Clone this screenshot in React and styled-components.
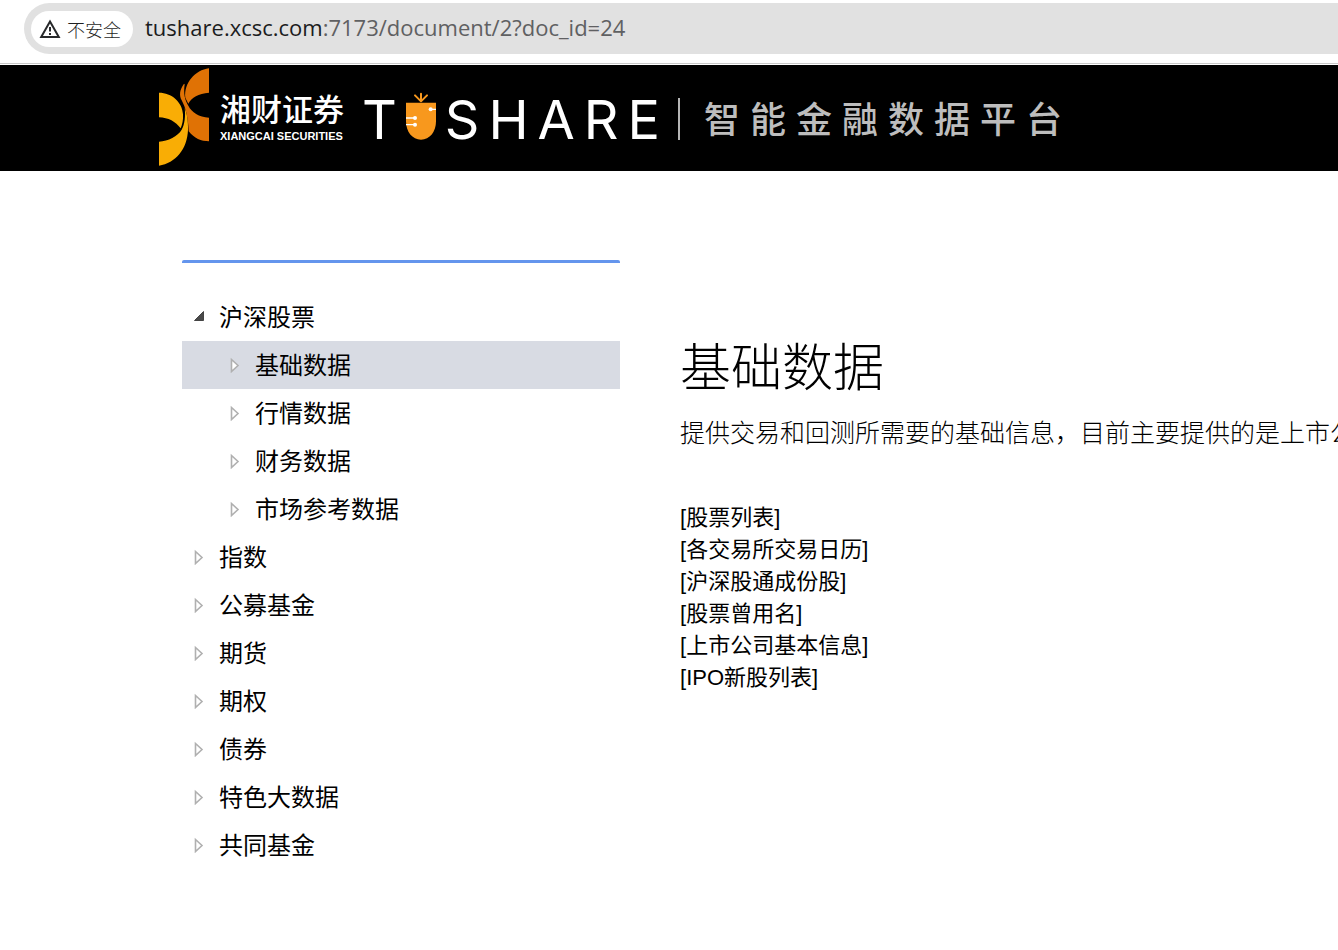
import styled, { createGlobalStyle } from 'styled-components';

const MENU = [
  {
    title: '沪深股票',
    children: [
      { title: '基础数据', active: true },
      { title: '行情数据' },
      { title: '财务数据' },
      { title: '市场参考数据' },
    ],
  },
  { title: '指数' },
  { title: '公募基金' },
  { title: '期货' },
  { title: '期权' },
  { title: '债券' },
  { title: '特色大数据' },
  { title: '共同基金' },
];

const DOCS = [
  '股票列表',
  '各交易所交易日历',
  '沪深股通成份股',
  '股票曾用名',
  '上市公司基本信息',
  'IPO新股列表',
];

const WarningIcon = () => (
  <svg width="22" height="20" viewBox="0 0 22 20" fill="none" aria-hidden="true">
    <path d="M11 2.5 19.8 18H2.2Z" stroke="#27292b" strokeWidth="2" />
    <path d="M11 8v4.6M11 14v2" stroke="#27292b" strokeWidth="2" />
  </svg>
);

const Arrow = ({ open }) => (
  <svg width="12" height="16" viewBox="0 0 12 16" aria-hidden="true">
    {open ? (
      <path d="M10.5 2.5v9H1.5Z" fill="#4a4a4a" stroke="#444" />
    ) : (
      <path d="M2.5 2.5v12L9 8.5Z" fill="#fff" stroke="#b0b0b0" strokeWidth="1.6" />
    )}
  </svg>
);

const XiangcaiMark = () => (
  <svg width="50" height="98" viewBox="0 0 150 292" aria-hidden="true">
    <path
      d="M150 0C108 5 74 45 79 88L88 106C98 88 118 75 150 73Z"
      fill="#e07205"
    />
    <path
      d="M75 46C62 64 60 80 68 96C80 118 88 150 89 189C106 210 126 219 150 219V148C120 146 98 132 88 112C78 96 73 76 77 48Z"
      fill="#e07205"
    />
    <path
      d="M0 73C38 73 70 101 72 138C73 156 70 168 65 180C50 160 28 148 0 147Z"
      fill="#f9ad05"
    />
    <path
      d="M0 292V220C28 218 56 204 68 184C77 168 80 142 77 118C84 137 88 157 87 184C85 242 50 284 0 292Z"
      fill="#f9ad05"
    />
  </svg>
);

const Carrot = () => (
  <svg width="32" height="48" viewBox="0 0 96 144" fill="none" aria-hidden="true">
    <path d="M3 32H93V88C93 120 74 143 48 143S3 120 3 88Z" fill="#f8981d" />
    <path
      d="M48 28V5M48 28L30 10M48 28L66 10"
      stroke="#f8981d"
      strokeWidth="6"
      strokeLinecap="round"
    />
    <path d="M3 78H29M3 98H29M78 52H93" stroke="#fff" strokeWidth="4" />
    <circle cx="30" cy="78" r="6" fill="#fff" />
    <circle cx="30" cy="98" r="6" fill="#fff" />
    <circle cx="77" cy="52" r="6" fill="#fff" />
  </svg>
);

const MenuItem = ({ item, level = 0 }) => (
  <li>
    <MenuLink href="#" $level={level} $active={item.active}>
      <Arrow open={!!item.children} />
      <MenuLabel>{item.title}</MenuLabel>
    </MenuLink>
    {item.children && (
      <MenuList>
        {item.children.map((child) => (
          <MenuItem key={child.title} item={child} level={level + 1} />
        ))}
      </MenuList>
    )}
  </li>
);

const App = () => {
  return (
    <>
      <GlobalStyle />
      <BrowserBar>
        <AddressBar>
          <SecurityButton type="button">
            <WarningIcon />
            不安全
          </SecurityButton>
          <Url>
            <strong>tushare.xcsc.com</strong>:7173/document/2?doc_id=24
          </Url>
        </AddressBar>
      </BrowserBar>
      <Header>
        <XiangcaiMark />
        <Company>
          <CompanyName>湘财证券</CompanyName>
          <CompanyLatin>XIANGCAI SECURITIES</CompanyLatin>
        </Company>
        <Wordmark>
          <span>T</span>
          <Carrot />
          <span>S&#8198;H&#8198;A&#8198;R&#8198;E</span>
        </Wordmark>
        <Divider />
        <Slogan>智 能 金 融 数 据 平 台</Slogan>
      </Header>
      <Main>
        <Sidebar>
          <MenuList>
            {MENU.map((item) => (
              <MenuItem key={item.title} item={item} />
            ))}
          </MenuList>
        </Sidebar>
        <Content>
          <Title>基础数据</Title>
          <Intro>提供交易和回测所需要的基础信息，目前主要提供的是上市公</Intro>
          <DocList>
            {DOCS.map((doc) => (
              <li key={doc}>
                <DocLink href="#">[{doc}]</DocLink>
              </li>
            ))}
          </DocList>
        </Content>
      </Main>
    </>
  );
};

const GlobalStyle = createGlobalStyle`
  * {
    box-sizing: border-box;
  }

  body {
    margin: 0;
    background-color: #fff;
    color: #000;
    font-family: 'Liberation Sans', 'Noto Sans CJK SC', sans-serif;
    overflow-x: hidden;
  }

  ul {
    margin: 0;
    padding: 0;
    list-style: none;
  }

  a {
    color: inherit;
    text-decoration: none;
  }

  svg {
    flex-shrink: 0;
  }
`;

const BrowserBar = styled.div`
  padding: 3px 0 9px 24px;
  border-bottom: 1px solid #c8c8c8;
  margin-bottom: 1px;
`;

const AddressBar = styled.div`
  height: 51px;
  display: flex;
  align-items: center;
  gap: 12px;
  padding-left: 7px;
  border-radius: 26px 0 0 26px;
  background-color: #e1e1e1;
`;

const SecurityButton = styled.button`
  height: 36px;
  display: flex;
  align-items: center;
  gap: 6px;
  padding: 0 12px 0 8px;
  border: none;
  border-radius: 18px;
  background-color: #fff;
  color: #1f1f1f;
  font-family: 'Noto Sans CJK SC', sans-serif;
  font-size: 18px;
  font-weight: 300;
  white-space: nowrap;
`;

const Url = styled.span`
  padding-bottom: 3px;
  color: #5f6062;
  font-family: 'Open Sans', 'Noto Sans', sans-serif;
  font-size: 22px;
  white-space: nowrap;

  strong {
    color: #1b1c1d;
    font-weight: 400;
  }
`;

const Header = styled.header`
  height: 106px;
  display: flex;
  align-items: center;
  padding: 0 0 2px 159px;
  background-color: #000;
  color: #fff;
  white-space: nowrap;
`;

const Company = styled.div`
  margin: 6px 18px 0 11px;
`;

const CompanyName = styled.div`
  font-size: 31px;
  font-weight: 500;
  line-height: 32px;
`;

const CompanyLatin = styled.div`
  font-size: 11px;
  font-weight: 700;
  line-height: 18px;
`;

const Wordmark = styled.div`
  display: flex;
  align-items: center;
  gap: 8px;
  font-family: Inter, sans-serif;
  font-size: 54px;
  font-weight: 400;
  line-height: 64px;

  span {
    padding-top: 6px;
  }

  svg {
    margin-bottom: 2px;
  }
`;

const Divider = styled.div`
  width: 2px;
  height: 42px;
  margin: 4px 24px 0 18px;
  background-color: #b5b5b5;
`;

const Slogan = styled.div`
  color: #bdbdbd;
  font-size: 36px;
  font-weight: 500;
`;

const Main = styled.main`
  display: flex;
  align-items: flex-start;
  gap: 60px;
  padding: 89px 0 0 182px;
`;

const Sidebar = styled.nav`
  flex: 0 0 438px;
  padding-top: 30px;
  border-top: 3px solid #6495ed;
  border-radius: 2px;
`;

const MenuList = styled.ul`
  font-size: 24px;
`;

const MenuLink = styled.a`
  height: 48px;
  display: flex;
  align-items: center;
  gap: 14px;
  padding-left: ${({ $level }) => 11 + $level * 36}px;
  background-color: ${({ $active }) => ($active ? '#d8dbe3' : 'transparent')};
`;

const MenuLabel = styled.span`
  padding-bottom: 4px;
`;

const Content = styled.section`
  flex: 1;
  min-width: 0;
  padding-top: 69px;
  overflow: hidden;
`;

const Title = styled.h1`
  margin: 0;
  font-size: 51px;
  font-weight: 300;
  line-height: 80px;
`;

const Intro = styled.p`
  margin: 4px 0 49px;
  font-size: 25px;
  font-weight: 300;
  line-height: 40px;
  white-space: nowrap;
`;

const DocList = styled.ul`
  font-size: 22px;
  line-height: 32px;
`;

const DocLink = styled.a`
  &:hover {
    text-decoration: underline;
  }
`;

export default App;
